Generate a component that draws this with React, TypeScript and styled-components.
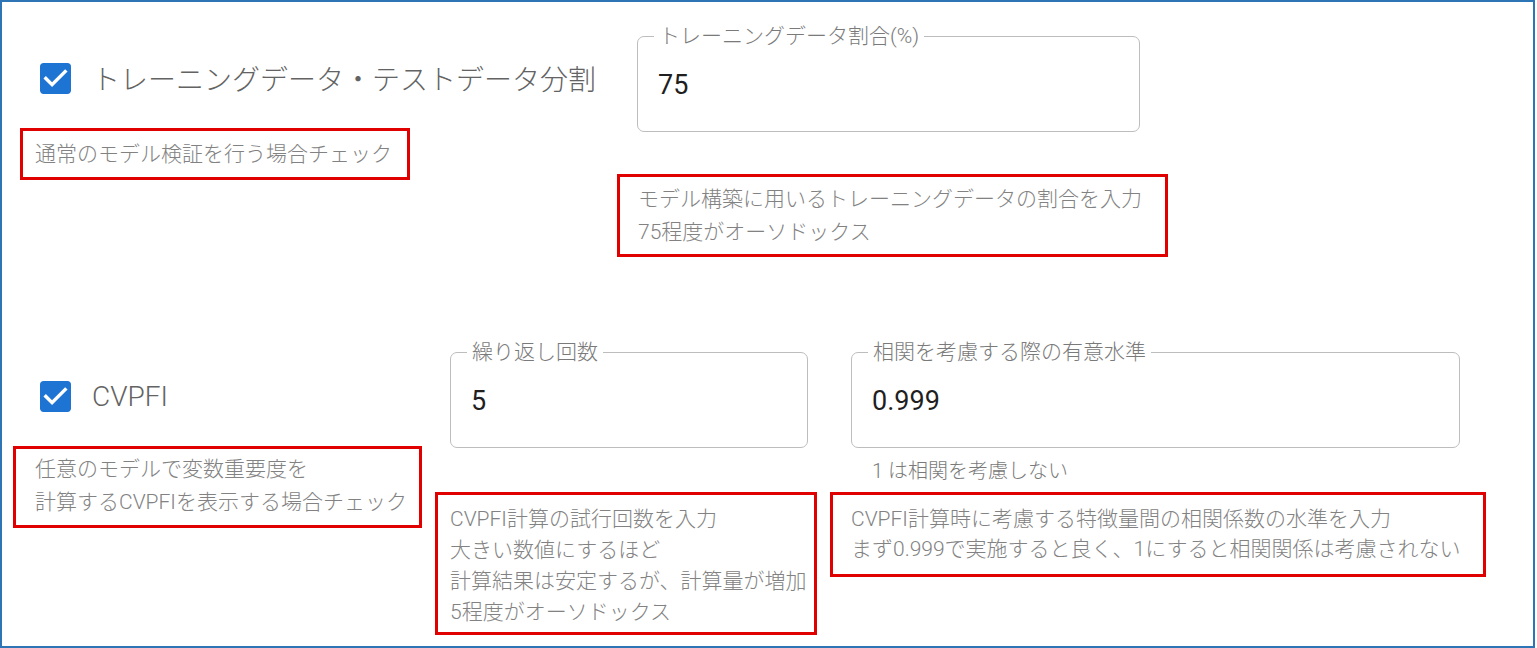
import * as React from "react";
import styled, { createGlobalStyle } from "styled-components";

const GlobalStyle = createGlobalStyle`
	html, body {
		margin: 0;
		padding: 0;
		background: #fff;
	}

	body {
		font-family: Roboto, "Noto Sans CJK JP", sans-serif;
	}
`;

const Frame = styled.div`
	box-sizing: border-box;
	width: 1535px;
	height: 648px;
	border: 2px solid #2e75b6;
	background: #fff;
	overflow: hidden;
	display: flex;
	flex-direction: column;
`;

const Section = styled.div`
	display: flex;
	align-items: flex-start;
`;

const Column = styled.div<{ $ml: number; $w?: number }>`
	display: flex;
	flex-direction: column;
	align-items: flex-start;
	flex: none;
	margin-left: ${(p) => p.$ml}px;
	width: ${(p) => (p.$w ? `${p.$w}px` : "auto")};
`;

const CheckRow = styled.label<{ $mt: number; $ml: number }>`
	display: flex;
	align-items: center;
	gap: 21px;
	height: 32px;
	margin-top: ${(p) => p.$mt}px;
	margin-left: ${(p) => p.$ml}px;
	color: #636363;
	font-size: 28px;
	font-weight: 300;
	white-space: nowrap;
`;

const Box = styled.svg`
	width: 31px;
	height: 31px;
	flex: none;
`;

const Field = styled.fieldset<{ $mt: number; $ml: number; $w: number }>`
	box-sizing: border-box;
	margin: ${(p) => p.$mt}px 0 0 ${(p) => p.$ml}px;
	width: ${(p) => p.$w}px;
	min-width: 0;
	padding: 20px 16px 29px;
	border: 1px solid #bdbdbd;
	border-radius: 7px;

	& legend {
		padding: 0 5px;
		font-size: 21px;
		font-weight: 300;
		line-height: 24px;
		color: #7a7a7a;
		white-space: nowrap;
	}
`;

const Value = styled.div`
	margin-left: 4px;
	font-size: 27px;
	line-height: 34px;
	color: #1f1f1f;
`;

const Helper = styled.div`
	margin: 9px 0 0 42px;
	font-size: 20px;
	font-weight: 300;
	line-height: 28px;
	color: #7a7a7a;
`;

const Note = styled.div<{ $mt: number; $w: number; $lh: number; $pad: string }>`
	box-sizing: border-box;
	margin-top: ${(p) => p.$mt}px;
	width: ${(p) => p.$w}px;
	padding: ${(p) => p.$pad};
	border: 3px solid #e00000;
	font-size: 21px;
	font-weight: 300;
	line-height: ${(p) => p.$lh}px;
	color: #828282;
	white-space: nowrap;
`;

function Checked() {
	return (
		<Box viewBox="3 3 18 18">
			<path
				fill="#1e74d3"
				d="M19 3H5c-1.11 0-2 .9-2 2v14c0 1.1.89 2 2 2h14c1.11 0 2-.9 2-2V5c0-1.1-.89-2-2-2z"
			/>
			<path fill="#fff" d="M10 17l-5-5 1.41-1.41L10 14.17l7.59-7.59L19 8l-9 9z" />
		</Box>
	);
}

function App() {
	return (
		<>
			<GlobalStyle />
			<Frame>
				<Section>
					<Column $ml={18} $w={597}>
						<CheckRow $mt={60} $ml={20}>
							<Checked />
							トレーニングデータ・テストデータ分割
						</CheckRow>
						<Note $mt={34} $w={390} $lh={31} $pad="8px 12px 7px">
							通常のモデル検証を行う場合チェック
						</Note>
					</Column>
					<Column $ml={0}>
						<Field $mt={22} $ml={20} $w={503}>
							<legend>トレーニングデータ割合(%)</legend>
							<Value>75</Value>
						</Field>
						<Note $mt={42} $w={551} $lh={33} $pad="6px 18px 5px">
							モデル構築に用いるトレーニングデータの割合を入力
							<br />
							75程度がオーソドックス
						</Note>
					</Column>
				</Section>
				<Section>
					<Column $ml={11} $w={422}>
						<CheckRow $mt={123} $ml={27}>
							<Checked />
							CVPFI
						</CheckRow>
						<Note $mt={34} $w={409} $lh={33} $pad="4px 19px 6px">
							任意のモデルで変数重要度を
							<br />
							計算するCVPFIを表示する場合チェック
						</Note>
					</Column>
					<Column $ml={0} $w={395}>
						<Field $mt={83} $ml={15} $w={358}>
							<legend>繰り返し回数</legend>
							<Value>5</Value>
						</Field>
						<Note $mt={44} $w={382} $lh={31} $pad="9px 12px 4px">
							CVPFI計算の試行回数を入力
							<br />
							大きい数値にするほど
							<br />
							計算結果は安定するが、計算量が増加
							<br />
							5程度がオーソドックス
						</Note>
					</Column>
					<Column $ml={0}>
						<Field $mt={83} $ml={21} $w={609}>
							<legend>相関を考慮する際の有意水準</legend>
							<Value>0.999</Value>
						</Field>
						<Helper>1 は相関を考慮しない</Helper>
						<Note $mt={7} $w={656} $lh={30} $pad="9px 18px 10px">
							CVPFI計算時に考慮する特徴量間の相関係数の水準を入力
							<br />
							まず0.999で実施すると良く、1にすると相関関係は考慮されない
						</Note>
					</Column>
				</Section>
			</Frame>
		</>
	);
}

export default App;
